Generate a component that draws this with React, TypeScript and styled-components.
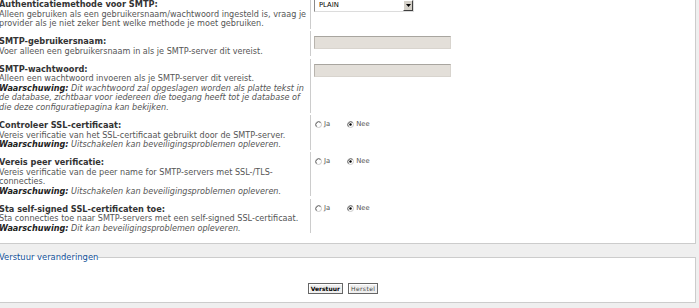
import React from 'react';
import styled, { createGlobalStyle } from 'styled-components';

const GlobalStyle = createGlobalStyle`
  html, body {
    margin: 0;
    padding: 0;
    background: #efefef;
    overflow: hidden;
  }
`;

const Page = styled.div`
  width: 705px;
  margin: -12px 0 0 -9px;
  font-family: 'DejaVu Sans', Verdana, sans-serif;
  font-size: 8.1px;
  line-height: 9.6px;
  color: #555;
`;

const Panel = styled.div`
  background: #fff;
  border: 1px solid #ccc;
  padding: 4px 0 8px 7px;
`;

const Row = styled.div`
  display: flex;
  padding: 1.15px 0;
`;

const Term = styled.div`
  width: 312px;
  flex: none;
  box-sizing: border-box;
  padding: 6px 0 0 0;
  border-right: 1px solid #ccc;
`;

const Title = styled.label`
  display: block;
  font-weight: bold;
  font-size: 8.2px;
  color: #333;
`;

const Explain = styled.span`
  display: block;
`;

const Warning = styled.span`
  display: block;
  font-style: italic;
  strong {
    color: #222;
  }
`;

const Field = styled.div`
  padding: 5px 0 0 3px;
`;

const SelectBox = styled.div`
  width: 100px;
  height: 13px;
  box-sizing: border-box;
  display: flex;
  align-items: center;
  justify-content: space-between;
  background: #fff;
  border: 1px solid;
  border-color: #8a8a8a #dcdcdc #dcdcdc #8a8a8a;
  padding-left: 4px;
  font-family: 'DejaVu Sans', Tahoma, sans-serif;
  font-size: 6.8px;
  color: #000;
`;

const SelectArrow = styled.span`
  width: 10px;
  height: 11px;
  box-sizing: border-box;
  display: flex;
  align-items: center;
  justify-content: center;
  background: #d4d0c8;
  border: 1px solid;
  border-color: #fff #404040 #404040 #fff;
`;

const TextInput = styled.input`
  display: block;
  width: 137px;
  height: 13px;
  box-sizing: border-box;
  margin: 0;
  background: #e3dfd9;
  border: 1px solid;
  border-color: #a8a59f #d8d4ce #d8d4ce #b8b4ae;
`;

const RadioGroup = styled.div`
  display: flex;
  gap: 17px;
  padding-left: 1px;
`;

const RadioLabel = styled.label`
  display: flex;
  align-items: center;
  gap: 2px;
  color: #555;
  font-size: 6.8px;
`;

const Fieldset = styled.fieldset`
  margin: 9px 0 0;
  padding: 0 8px 8px 7px;
  min-width: 0;
  background: #fff;
  border: 1px solid #ccc;
`;

const Legend = styled.legend`
  padding: 0;
  color: #115098;
  font-size: 8.4px;
  line-height: 9.6px;
`;

const ButtonBar = styled.p`
  margin: 0;
  padding-top: 21px;
  display: flex;
  justify-content: center;
  gap: 5px;
`;

const Button = styled.button<{ $primary?: boolean }>`
  height: 11px;
  box-sizing: border-box;
  margin: 0;
  padding: 0 2px;
  font-family: 'DejaVu Sans', Verdana, sans-serif;
  font-size: 6px;
  line-height: 9px;
  font-weight: ${(p) => (p.$primary ? 'bold' : 'normal')};
  letter-spacing: ${(p) => (p.$primary ? '0' : '0.4px')};
  color: ${(p) => (p.$primary ? '#000' : '#444')};
  background: #efefef;
  border: 1px solid #666;
  box-shadow: inset 1px 1px 0 #fff;
`;

const RadioMark: React.FC<{ checked?: boolean }> = ({ checked }) => (
  <svg width="7" height="7" viewBox="0 0 7 7">
    <circle cx="3.5" cy="3.5" r="3" fill="#fff" stroke="#c8c8c8" strokeWidth="1" />
    <path d="M1.4 5.6 A3 3 0 0 1 5.6 1.4" fill="none" stroke="#666" strokeWidth="1" />
    {checked && <circle cx="3.5" cy="3.5" r="1.2" fill="#000" />}
  </svg>
);

const YesNo: React.FC<{ name: string }> = ({ name }) => (
  <RadioGroup>
    <RadioLabel htmlFor={`${name}-ja`}>
      <RadioMark />
      Ja
    </RadioLabel>
    <RadioLabel htmlFor={`${name}-nee`}>
      <RadioMark checked />
      Nee
    </RadioLabel>
  </RadioGroup>
);

interface Setting {
  id: string;
  title: string;
  explain: string;
  warning?: string;
  field: React.ReactNode;
}

const settings: Setting[] = [
  {
    id: 'smtp_auth_method',
    title: 'Authenticatiemethode voor SMTP:',
    explain:
      'Alleen gebruiken als een gebruikersnaam/wachtwoord ingesteld is, vraag je provider als je niet zeker bent welke methode je moet gebruiken.',
    field: (
      <SelectBox>
        PLAIN
        <SelectArrow>
          <svg width="5" height="3" viewBox="0 0 5 3">
            <path d="M0 0 H5 L2.5 3 Z" fill="#000" />
          </svg>
        </SelectArrow>
      </SelectBox>
    ),
  },
  {
    id: 'smtp_username',
    title: 'SMTP-gebruikersnaam:',
    explain: 'Voer alleen een gebruikersnaam in als je SMTP-server dit vereist.',
    field: <TextInput id="smtp_username" />,
  },
  {
    id: 'smtp_password',
    title: 'SMTP-wachtwoord:',
    explain: 'Alleen een wachtwoord invoeren als je SMTP-server dit vereist.',
    warning:
      'Dit wachtwoord zal opgeslagen worden als platte tekst in de database, zichtbaar voor iedereen die toegang heeft tot je database of die deze configuratiepagina kan bekijken.',
    field: <TextInput id="smtp_password" type="password" />,
  },
  {
    id: 'smtp_verify_peer',
    title: 'Controleer SSL-certificaat:',
    explain: 'Vereis verificatie van het SSL-certificaat gebruikt door de SMTP-server.',
    warning: 'Uitschakelen kan beveiligingsproblemen opleveren.',
    field: <YesNo name="smtp_verify_peer" />,
  },
  {
    id: 'smtp_verify_peer_name',
    title: 'Vereis peer verificatie:',
    explain: 'Vereis verificatie van de peer name for SMTP-servers met SSL-/TLS-connecties.',
    warning: 'Uitschakelen kan beveiligingsproblemen opleveren.',
    field: <YesNo name="smtp_verify_peer_name" />,
  },
  {
    id: 'smtp_allow_self_signed',
    title: 'Sta self-signed SSL-certificaten toe:',
    explain: 'Sta connecties toe naar SMTP-servers met een self-signed SSL-certificaat.',
    warning: 'Dit kan beveiligingsproblemen opleveren.',
    field: <YesNo name="smtp_allow_self_signed" />,
  },
];

export default function App() {
  return (
    <>
      <GlobalStyle />
      <Page>
        <Panel>
          {settings.map((s) => (
            <Row key={s.id}>
              <Term>
                <Title htmlFor={s.id}>{s.title}</Title>
                <Explain>{s.explain}</Explain>
                {s.warning && (
                  <Warning>
                    <strong>Waarschuwing:</strong> {s.warning}
                  </Warning>
                )}
              </Term>
              <Field>{s.field}</Field>
            </Row>
          ))}
        </Panel>
        <Fieldset>
          <Legend>Verstuur veranderingen</Legend>
          <ButtonBar>
            <Button $primary>Verstuur</Button>
            <Button>Herstel</Button>
          </ButtonBar>
        </Fieldset>
      </Page>
    </>
  );
}
